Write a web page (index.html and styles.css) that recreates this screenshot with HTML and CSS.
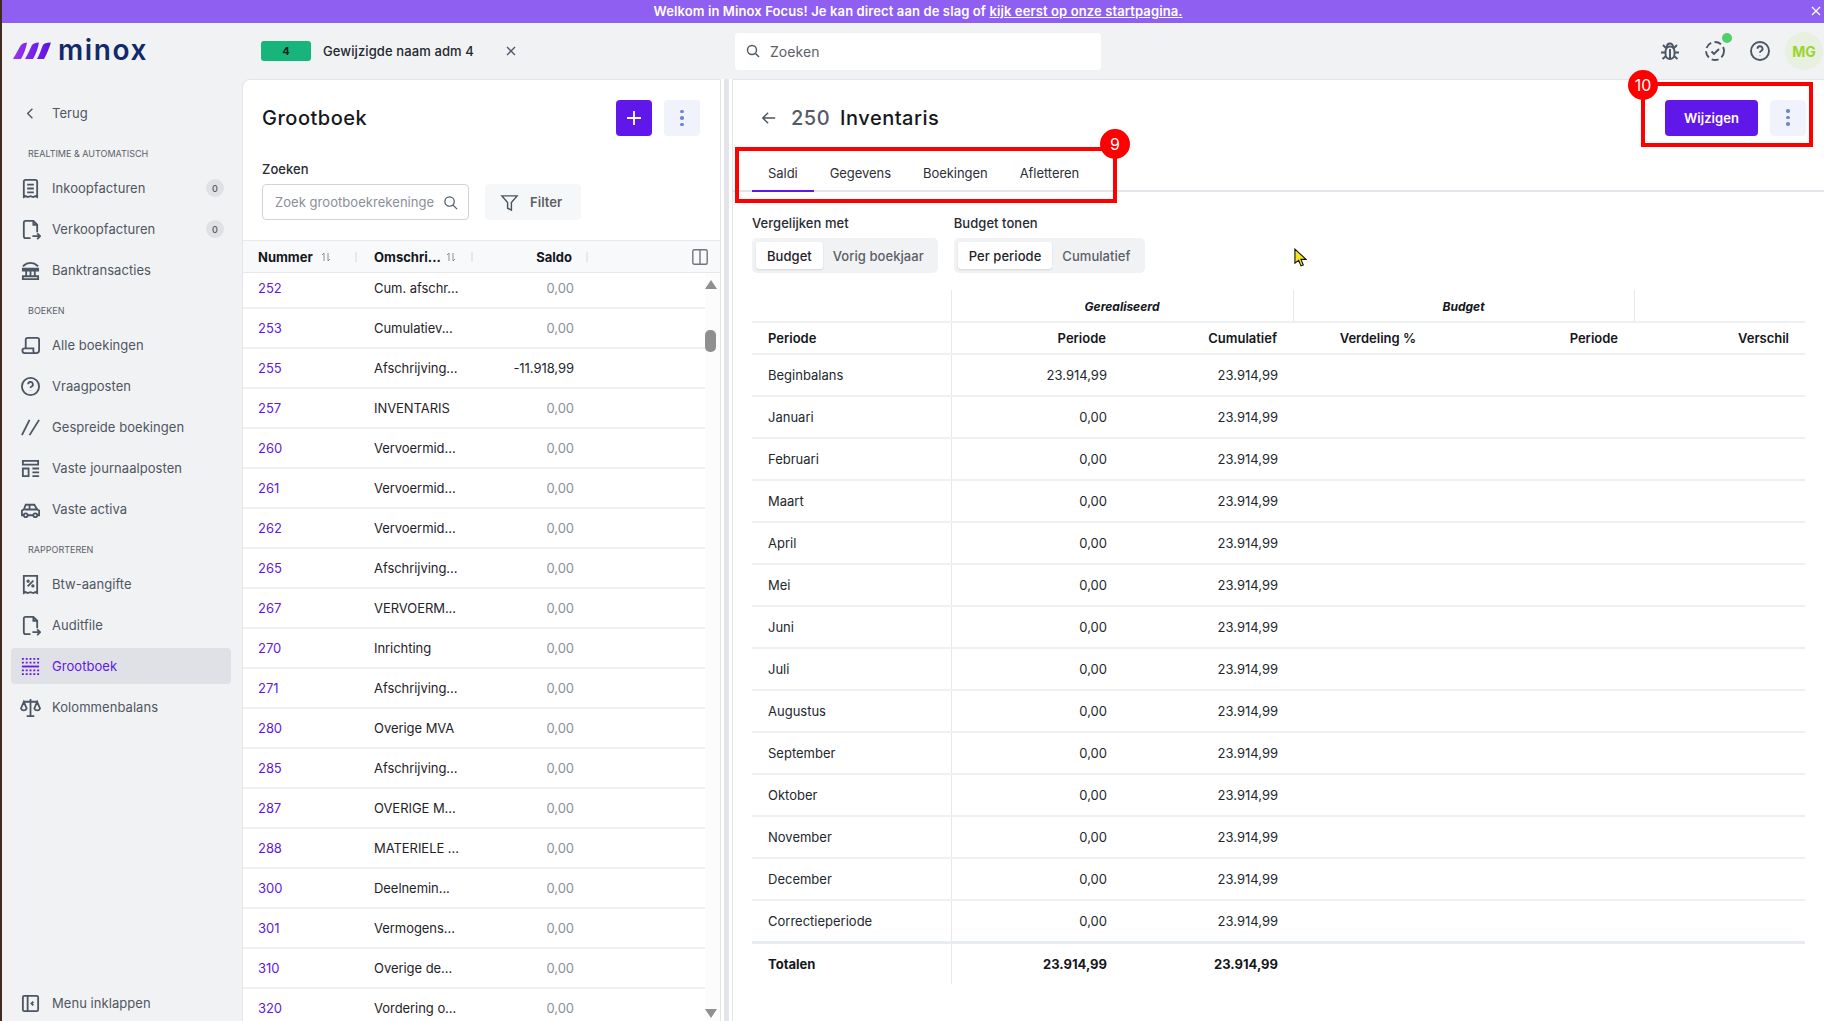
FILE: index.html
```html
<!DOCTYPE html>
<html lang="nl">
<head>
  <meta charset="UTF-8">
  <title>Minox - Grootboek</title>
  <link rel="stylesheet" href="styles.css">
</head>
<body>
  <div class="banner">
    <span>Welkom in Minox Focus! Je kan direct aan de slag of <u>kijk eerst op onze startpagina.</u></span>
    <svg class="banner-close" viewBox="0 0 12 12"><path d="M2 2l8 8M10 2l-8 8"/></svg>
  </div>

  <header class="topbar">
    <div class="brand">
      <svg class="brand-mark" viewBox="0 0 38 17">
        <defs>
          <linearGradient id="markFill" x1="0" x2="1" y1="0" y2="0">
            <stop offset="0" stop-color="#9a35ea"/>
            <stop offset="1" stop-color="#5a12e6"/>
          </linearGradient>
        </defs>
        <path fill="url(#markFill)" d="M0 17C3 12 6 6 8 3Q10 .5 14 .5C13 6 11 12 8 17zM12 17C15 12 17 7 19 3Q21 .5 26 .5C25 6 23 12 20 17zM24 17C27 12 28 7 30 3Q31 .5 38 .5C36 6 34 12 31 17z"/>
      </svg>
      <span class="brand-name">minox</span>
    </div>
    <div class="admin">
      <span class="admin-badge">4</span>
      <span class="admin-name">Gewijzigde naam adm 4</span>
      <svg class="admin-close" viewBox="0 0 12 12"><path d="M2 2l8 8M10 2l-8 8"/></svg>
    </div>
    <div class="global-search">
      <svg viewBox="0 0 16 16"><circle cx="7" cy="7" r="4.500"/><path d="M10.500 10.500L14 14"/></svg>
      <span>Zoeken</span>
    </div>
    <div class="top-icons">
      <svg viewBox="0 0 22 22"><path d="M6.500 12a4.500 5.500 0 0 1 9 0v2a4.500 5 0 0 1-9 0zM8 8V6.500a3 3 0 0 1 6 0V8M11 9v10M6.500 12.500H2M15.500 12.500H20M7 8L4 5M15 8l3-3M7 16l-3.500 3M15 16l3.500 3"/></svg>
      <span class="task-icon">
        <svg viewBox="0 0 22 22"><circle cx="11" cy="11" r="9" stroke-dasharray="7 3.400"/><path d="M7.500 11.500l2.500 2.500 5-5"/></svg>
        <i class="task-dot"></i>
      </span>
      <svg viewBox="0 0 22 22"><circle cx="11" cy="11" r="9"/><path d="M8.500 8.700a2.500 2.500 0 1 1 3.600 2.300c-.8.400-1.100.9-1.100 1.700M11 15.500v.3"/></svg>
      <span class="avatar">MG</span>
    </div>
  </header>

  <div class="main">
    <nav class="sidebar">
      <a class="nav-item nav-back">
        <svg viewBox="0 0 22 22"><path d="M13 6l-5 5 5 5"/></svg>
        <span>Terug</span>
      </a>
      <div class="nav-label">Realtime &amp; automatisch</div>
      <a class="nav-item">
        <svg viewBox="0 0 22 22"><path d="M4 20V4a2 2 0 0 1 2-2h10a2 2 0 0 1 2 2v16l-2-1-2 1-3-1-3 1-2-1zM7.500 7h7M7.500 11h7M7.500 15h7"/></svg>
        <span>Inkoopfacturen</span><b class="count">0</b>
      </a>
      <a class="nav-item">
        <svg viewBox="0 0 22 22"><path d="M11 20H6a2 2 0 0 1-2-2V4a2 2 0 0 1 2-2h8l4 4v8M14 2v4h4M13 18h8M18 15l3 3-3 3"/></svg>
        <span>Verkoopfacturen</span><b class="count">0</b>
      </a>
      <a class="nav-item">
        <svg viewBox="0 0 22 22"><path d="M2 20h18M3 17h16v3H3zM3 9h16v2H3zM6.500 11v6M11 11v6M15.500 11v6M3 6.500c5-4.500 11-4.500 16 0"/></svg>
        <span>Banktransacties</span>
      </a>
      <div class="nav-label">Boeken</div>
      <a class="nav-item">
        <svg viewBox="0 0 22 22"><path d="M6 14V5a2 2 0 0 1 2-2h10a2 2 0 0 1 2 2v11a3 3 0 0 1-3 3H5a2.500 2.500 0 0 1 0-5h9v2.500a2.500 2.500 0 0 0 3 2.500"/></svg>
        <span>Alle boekingen</span>
      </a>
      <a class="nav-item">
        <svg viewBox="0 0 22 22"><circle cx="11" cy="11" r="9"/><path d="M8.500 8.700a2.500 2.500 0 1 1 3.600 2.300c-.8.400-1.100.9-1.100 1.700M11 15.500v.3"/></svg>
        <span>Vraagposten</span>
      </a>
      <a class="nav-item">
        <svg viewBox="0 0 22 22"><path d="M10 3L2 19M20 3L10 19"/></svg>
        <span>Gespreide boekingen</span>
      </a>
      <a class="nav-item">
        <svg viewBox="0 0 22 22"><path d="M3 3h16v4H3zM3 11h6v8H3zM13 11h7M13 15h7M13 19h7"/></svg>
        <span>Vaste journaalposten</span>
      </a>
      <a class="nav-item">
        <svg viewBox="0 0 22 22"><path d="M4 17H2v-5l2-1 2-5h9l3 5 2 1v5h-2M8 17h6M5 11h14M10 6v5"/><circle cx="6" cy="17" r="2"/><circle cx="16" cy="17" r="2"/></svg>
        <span>Vaste activa</span>
      </a>
      <div class="nav-label">Rapporteren</div>
      <a class="nav-item">
        <svg viewBox="0 0 22 22"><path d="M4 20V2h14v18l-2-1-2 1-3-1-3 1-2-1zM8 13l6-6"/><circle cx="8.500" cy="7.500" r=".8"/><circle cx="13.500" cy="12.500" r=".8"/></svg>
        <span>Btw-aangifte</span>
      </a>
      <a class="nav-item">
        <svg viewBox="0 0 22 22"><path d="M11 20H6a2 2 0 0 1-2-2V4a2 2 0 0 1 2-2h8l4 4v8M14 2v4h4M13 18h8M18 15l3 3-3 3"/></svg>
        <span>Auditfile</span>
      </a>
      <a class="nav-item is-active">
        <svg viewBox="0 0 22 22"><path class="dots" d="M2 3h18M2 7h18M2 15h18M2 19h18"/><path d="M2 11h18"/></svg>
        <span>Grootboek</span>
      </a>
      <a class="nav-item">
        <svg viewBox="0 0 22 22"><path d="M11 2v17M7 20h8M4 5h14M4 5l-3 7a3.200 3.200 0 0 0 6 0zM18 5l-3 7a3.200 3.200 0 0 0 6 0z"/></svg>
        <span>Kolommenbalans</span>
      </a>
      <a class="nav-item nav-collapse">
        <svg viewBox="0 0 22 22"><rect x="3" y="3" width="16" height="16" rx="1.500"/><path d="M8 3v16M14 9l-2 2 2 2"/></svg>
        <span>Menu inklappen</span>
      </a>
    </nav>

    <section class="list-panel">
      <div class="list-head">
        <h1>Grootboek</h1>
        <button class="btn-add"><svg viewBox="0 0 16 16"><path d="M8 1v14M1 8h14"/></svg></button>
        <button class="btn-more"><i></i><i></i><i></i></button>
      </div>
      <div class="list-search">
        <div class="field-label">Zoeken</div>
        <div class="search-row">
          <div class="search-input">
            <span>Zoek grootboekrekeningen</span>
            <svg viewBox="0 0 16 16"><circle cx="7" cy="7" r="5"/><path d="M10.500 10.500L15 15"/></svg>
          </div>
          <button class="btn-filter">
            <svg viewBox="0 0 20 20"><path d="M2 3h16l-6 7v8l-4-2v-6z"/></svg>
            <span>Filter</span>
          </button>
        </div>
      </div>
      <div class="list-header">
        <div class="col-num">Nummer<svg class="sort" viewBox="0 0 10 10"><path d="M3 9V1L1 3M7 1v8l2-2"/></svg></div>
        <i class="col-sep"></i>
        <div class="col-desc">Omschri...<svg class="sort" viewBox="0 0 10 10"><path d="M3 9V1L1 3M7 1v8l2-2"/></svg></div>
        <i class="col-sep"></i>
        <div class="col-saldo">Saldo</div>
        <i class="col-sep"></i>
        <svg class="col-toggle" viewBox="0 0 16 16"><rect x=".8" y=".8" width="14.400" height="14.400" rx="1.500"/><path d="M8 1v14"/></svg>
      </div>
      <div class="list-body">
        <div class="rows">
          <div class="row"><a>252</a><span>Cum. afschr...</span><em>0,00</em></div>
          <div class="row"><a>253</a><span>Cumulatiev...</span><em>0,00</em></div>
          <div class="row"><a>255</a><span>Afschrijving...</span><em class="neg">-11.918,99</em></div>
          <div class="row"><a>257</a><span>INVENTARIS</span><em>0,00</em></div>
          <div class="row"><a>260</a><span>Vervoermid...</span><em>0,00</em></div>
          <div class="row"><a>261</a><span>Vervoermid...</span><em>0,00</em></div>
          <div class="row"><a>262</a><span>Vervoermid...</span><em>0,00</em></div>
          <div class="row"><a>265</a><span>Afschrijving...</span><em>0,00</em></div>
          <div class="row"><a>267</a><span>VERVOERM...</span><em>0,00</em></div>
          <div class="row"><a>270</a><span>Inrichting</span><em>0,00</em></div>
          <div class="row"><a>271</a><span>Afschrijving...</span><em>0,00</em></div>
          <div class="row"><a>280</a><span>Overige MVA</span><em>0,00</em></div>
          <div class="row"><a>285</a><span>Afschrijving...</span><em>0,00</em></div>
          <div class="row"><a>287</a><span>OVERIGE M...</span><em>0,00</em></div>
          <div class="row"><a>288</a><span>MATERIELE ...</span><em>0,00</em></div>
          <div class="row"><a>300</a><span>Deelnemin...</span><em>0,00</em></div>
          <div class="row"><a>301</a><span>Vermogens...</span><em>0,00</em></div>
          <div class="row"><a>310</a><span>Overige de...</span><em>0,00</em></div>
          <div class="row"><a>320</a><span>Vordering o...</span><em>0,00</em></div>
        </div>
        <div class="scrollbar">
          <i class="arrow-up"></i>
          <i class="thumb"></i>
          <i class="arrow-down"></i>
        </div>
      </div>
    </section>

    <div class="divider"></div>

    <section class="detail-panel">
      <div class="detail-head">
        <svg class="back" viewBox="0 0 18 18"><path d="M16 9H2M8 3L2 9l6 6"/></svg>
        <h2><span class="acc-num">250</span>Inventaris</h2>
        <button class="btn-edit">Wijzigen</button>
        <button class="btn-more"><i></i><i></i><i></i></button>
      </div>
      <div class="tabs">
        <a class="is-active">Saldi</a>
        <a>Gegevens</a>
        <a>Boekingen</a>
        <a>Afletteren</a>
      </div>
      <div class="filters">
        <div>
          <div class="field-label">Vergelijken met</div>
          <div class="segment"><b>Budget</b><span>Vorig boekjaar</span></div>
        </div>
        <div>
          <div class="field-label">Budget tonen</div>
          <div class="segment"><b>Per periode</b><span>Cumulatief</span></div>
        </div>
      </div>
      <table class="saldi">
        <colgroup>
          <col class="w-label"><col class="w-amt"><col class="w-amt"><col class="w-pct"><col class="w-bud"><col class="w-amt">
        </colgroup>
        <thead>
          <tr class="group-row">
            <th></th>
            <th colspan="2" class="group sep-r">Gerealiseerd</th>
            <th colspan="2" class="group sep-r">Budget</th>
            <th></th>
          </tr>
          <tr class="col-row">
            <th class="txt">Periode</th><th>Periode</th><th>Cumulatief</th><th>Verdeling %</th><th>Periode</th><th>Verschil</th>
          </tr>
        </thead>
        <tbody>
          <tr><td class="txt">Beginbalans</td><td>23.914,99</td><td>23.914,99</td><td></td><td></td><td></td></tr>
          <tr><td class="txt">Januari</td><td>0,00</td><td>23.914,99</td><td></td><td></td><td></td></tr>
          <tr><td class="txt">Februari</td><td>0,00</td><td>23.914,99</td><td></td><td></td><td></td></tr>
          <tr><td class="txt">Maart</td><td>0,00</td><td>23.914,99</td><td></td><td></td><td></td></tr>
          <tr><td class="txt">April</td><td>0,00</td><td>23.914,99</td><td></td><td></td><td></td></tr>
          <tr><td class="txt">Mei</td><td>0,00</td><td>23.914,99</td><td></td><td></td><td></td></tr>
          <tr><td class="txt">Juni</td><td>0,00</td><td>23.914,99</td><td></td><td></td><td></td></tr>
          <tr><td class="txt">Juli</td><td>0,00</td><td>23.914,99</td><td></td><td></td><td></td></tr>
          <tr><td class="txt">Augustus</td><td>0,00</td><td>23.914,99</td><td></td><td></td><td></td></tr>
          <tr><td class="txt">September</td><td>0,00</td><td>23.914,99</td><td></td><td></td><td></td></tr>
          <tr><td class="txt">Oktober</td><td>0,00</td><td>23.914,99</td><td></td><td></td><td></td></tr>
          <tr><td class="txt">November</td><td>0,00</td><td>23.914,99</td><td></td><td></td><td></td></tr>
          <tr><td class="txt">December</td><td>0,00</td><td>23.914,99</td><td></td><td></td><td></td></tr>
          <tr><td class="txt">Correctieperiode</td><td>0,00</td><td>23.914,99</td><td></td><td></td><td></td></tr>
        </tbody>
        <tfoot>
          <tr><td class="txt">Totalen</td><td>23.914,99</td><td>23.914,99</td><td></td><td></td><td></td></tr>
        </tfoot>
      </table>
    </section>
  </div>

  <!-- annotations drawn on top of the screenshot -->
  <div class="mark mark-tabs"><span class="mark-num">9</span></div>
  <div class="mark mark-actions"><span class="mark-num">10</span></div>
  <svg class="cursor" viewBox="0 0 14 20"><path d="M1 1v15l4-3 2.500 6 2.500-1-2.500-6H13z"/></svg>
</body>
</html>
```

FILE: styles.css
```css
* {
  box-sizing: border-box;
}
html, body {
  height: 100%;
}
body {
  margin: 0;
  position: relative;
  display: flex;
  flex-direction: column;
  overflow: hidden;
  border-left: 2px solid #3f2b20;
  font-family: Inter, "Liberation Sans", sans-serif;
  font-size: 13px;
  letter-spacing: .05px;
  color: #1f2329;
  background: #f1f2f4;
}
svg {
  fill: none;
  stroke: #4b5563;
  stroke-width: 1.9;
  flex: none;
}
button {
  border: none;
  font-family: inherit;
  letter-spacing: inherit;
}

/* banner */
.banner {
  flex: none;
  height: 23px;
  display: flex;
  align-items: center;
  justify-content: center;
  padding: 0 0 2px 10px;
  position: relative;
  background: #8f5ff2;
  color: #fff;
  font-size: 13px;
  font-weight: 600;
  letter-spacing: .11px;
}
.banner-close {
  position: absolute;
  right: 2px;
  top: 5px;
  width: 12px;
  height: 12px;
  stroke: #fff;
  stroke-width: 1.3;
}

/* top bar */
.topbar {
  flex: none;
  height: 56px;
  display: flex;
  align-items: center;
}
.brand {
  width: 259px;
  flex: none;
  display: flex;
  align-items: center;
  padding-left: 11px;
  padding-bottom: 3px;
}
.brand-mark {
  width: 38px;
  height: 17px;
  margin-top: 2px;
  stroke: none;
}
.brand-name {
  margin-left: 7px;
  font-size: 28px;
  line-height: 30px;
  font-weight: 600;
  letter-spacing: 1.600px;
  color: #12296b;
}
.admin {
  width: 474px;
  flex: none;
  display: flex;
  align-items: center;
}
.admin-badge {
  width: 50px;
  height: 20px;
  display: flex;
  align-items: center;
  justify-content: center;
  background: #17b47b;
  border-radius: 3px;
  font-size: 11px;
  font-weight: 700;
  color: #10241b;
}
.admin-name {
  margin-left: 12px;
  font-weight: 500;
  letter-spacing: .1px;
  color: #23272e;
}
.admin-close {
  margin-left: 31px;
  width: 12px;
  height: 12px;
  stroke-width: 1.3;
}
.global-search {
  width: 366px;
  height: 37px;
  flex: none;
  display: flex;
  align-items: center;
  gap: 9px;
  padding-left: 10px;
  background: #fff;
  border-radius: 4px;
  font-size: 14px;
  color: #5b6068;
}
.global-search svg {
  width: 16px;
  height: 16px;
  stroke-width: 1.4;
}
.top-icons {
  margin-left: auto;
  display: flex;
  align-items: center;
  gap: 23px;
}
.top-icons > svg, .task-icon svg {
  width: 22px;
  height: 22px;
  display: block;
}
.task-icon {
  position: relative;
}
.task-dot {
  position: absolute;
  top: -7px;
  right: -6px;
  width: 10px;
  height: 10px;
  border-radius: 50%;
  background: #4fd069;
}
.avatar {
  width: 38px;
  height: 38px;
  margin-left: -9px;
  margin-right: 1px;
  display: flex;
  align-items: center;
  justify-content: center;
  border-radius: 50%;
  background: #e8f0df;
  color: #9ad430;
  font-size: 14px;
  font-weight: 700;
}

/* layout */
.main {
  flex: 1;
  min-height: 0;
  display: flex;
}

/* sidebar */
.sidebar {
  width: 240px;
  flex: none;
  display: flex;
  flex-direction: column;
  padding: 16px 11px 0 9px;
}
.nav-item {
  height: 36px;
  flex: none;
  margin-bottom: 5px;
  display: flex;
  align-items: center;
  padding: 0 9px;
  border-radius: 4px;
  color: #4f5661;
}
.nav-item svg {
  width: 21px;
  height: 21px;
  margin-right: 11px;
}
.nav-label {
  height: 34px;
  flex: none;
  padding: 11px 0 0 17px;
  font-size: 9px;
  line-height: 14px;
  letter-spacing: 0;
  text-transform: uppercase;
  color: #5b6068;
}
.nav-back svg {
  stroke-width: 1.4;
}
.count {
  margin-left: auto;
  margin-right: -2px;
  width: 18px;
  height: 18px;
  display: flex;
  align-items: center;
  justify-content: center;
  border-radius: 50%;
  background: #dfe1e5;
  font-size: 9px;
  font-weight: 500;
}
.is-active.nav-item {
  background: #dfe1e6;
  color: #5f17ea;
}
.is-active svg {
  stroke: #5f17ea;
}
.is-active .dots {
  stroke-dasharray: 2 2;
}
.nav-collapse {
  margin-top: auto;
  margin-bottom: 0;
}

/* account list */
.list-panel {
  width: 479px;
  flex: none;
  display: flex;
  flex-direction: column;
  min-height: 0;
  background: #fff;
  border: 1px solid #e3e5ea;
  border-bottom: none;
  border-radius: 8px 0 0 0;
}
.list-head {
  height: 78px;
  flex: none;
  display: flex;
  align-items: center;
  padding: 0 20px 2px 19px;
}
h1, h2 {
  margin: 0;
  font-size: 20px;
  font-weight: 500;
  letter-spacing: .5px;
  color: #14171c;
}
.list-head h1 {
  margin-right: auto;
}
.btn-add {
  width: 36px;
  height: 36px;
  margin-right: 12px;
  display: flex;
  align-items: center;
  justify-content: center;
  background: #5f17ea;
  border-radius: 4px;
}
.btn-add svg {
  width: 16px;
  height: 16px;
  stroke: #fff;
  stroke-width: 1.8;
}
.btn-more {
  width: 36px;
  height: 36px;
  display: flex;
  flex-direction: column;
  align-items: center;
  justify-content: center;
  gap: 3px;
  background: #f0f3fb;
  border-radius: 4px;
}
.btn-more i {
  width: 3.500px;
  height: 3.500px;
  border-radius: 50%;
  background: #6f86cf;
}
.list-search {
  flex: none;
  padding: 0 19px;
  height: 82px;
}
.field-label {
  height: 18px;
  line-height: 18px;
  margin-bottom: 6px;
  font-size: 13px;
  font-weight: 500;
  color: #262a31;
}
.list-search .field-label {
  margin-top: 2px;
  margin-bottom: 6px;
}
.search-row {
  display: flex;
  gap: 16px;
}
.search-input {
  width: 207px;
  height: 36px;
  display: flex;
  align-items: center;
  justify-content: space-between;
  padding: 0 10px 0 12px;
  border: 1px solid #cfd3d9;
  border-radius: 4px;
  color: #8a8f98;
}
.search-input span {
  width: 160px;
  overflow: hidden;
  white-space: nowrap;
}
.search-input svg {
  width: 15px;
  height: 15px;
  stroke-width: 1.3;
}
.btn-filter {
  width: 96px;
  height: 36px;
  display: flex;
  align-items: center;
  padding-left: 15px;
  gap: 11px;
  background: #f6f7f8;
  border-radius: 4px;
  font-size: 13px;
  font-weight: 600;
  color: #5b6068;
}
.btn-filter svg {
  width: 19px;
  height: 19px;
  stroke-width: 1.5;
}
.list-header {
  height: 33px;
  flex: none;
  display: flex;
  align-items: center;
  background: #f8f9fa;
  border-top: 1px solid #e6e8ec;
  border-bottom: 1px solid #e6e8ec;
  font-size: 13px;
  font-weight: 700;
  letter-spacing: 0;
  color: #14171c;
}
.col-num {
  width: 112px;
  padding-left: 15px;
  display: flex;
  align-items: center;
}
.col-desc {
  width: 114px;
  padding-left: 17px;
  display: flex;
  align-items: center;
}
.col-desc .sort {
  margin-left: 5px;
}
.col-saldo {
  width: 113px;
  text-align: right;
  padding-right: 14px;
}
.sort {
  width: 10px;
  height: 10px;
  margin-left: 8px;
  stroke: #8a8f98;
  stroke-width: 1;
}
.col-sep {
  width: 2px;
  height: 10px;
  background: #e6e8ec;
  flex: none;
}
.col-toggle {
  margin-left: 104px;
  width: 16px;
  height: 16px;
  stroke: #70757e;
  stroke-width: 1.400;
}
.list-body {
  flex: 1;
  min-height: 0;
  display: flex;
  overflow: hidden;
}
.rows {
  flex: 1;
  margin-top: -4px;
}
.row {
  height: 40px;
  display: flex;
  align-items: center;
  border-bottom: 2px solid #eef0f2;
  font-size: 13px;
  letter-spacing: -.05px;
}
.row a {
  width: 114px;
  padding-left: 15px;
  color: #5f17ea;
}
.row span {
  width: 117px;
  padding-left: 17px;
  flex: none;
  white-space: nowrap;
}
.row em {
  width: 100px;
  flex: none;
  font-style: normal;
  text-align: right;
  color: #8a8f98;
}
.row em.neg {
  color: #23272e;
}
.scrollbar {
  width: 15px;
  flex: none;
  display: flex;
  flex-direction: column;
  align-items: flex-start;
  background: #fcfcfc;
}
.arrow-up {
  margin: 7px 0 0 0;
  border: 6px solid transparent;
  border-top: none;
  border-bottom: 9px solid #8f8f8f;
}
.thumb {
  width: 11px;
  height: 22px;
  margin-top: 41px;
  border-radius: 5px;
  background: #8f8f8f;
}
.arrow-down {
  margin: auto 0 3px 0;
  border: 6px solid transparent;
  border-bottom: none;
  border-top: 9px solid #8f8f8f;
}
.divider {
  width: 11px;
  flex: none;
  border-left: 3px solid #fff;
  border-right: 3px solid #fff;
  background: #e3e5ea;
}

/* detail */
.detail-panel {
  flex: 1;
  min-width: 0;
  background: #fff;
  border-left: 1px solid #e3e5ea;
  border-top: 1px solid #e3e5ea;
}
.detail-head {
  height: 72px;
  display: flex;
  align-items: center;
  padding: 1px 18px 0 28px;
  margin-top: 1px;
}
.back {
  width: 16px;
  height: 16px;
  margin-right: 14px;
  stroke-width: 1.600;
}
.detail-head h2 {
  margin-right: auto;
}
.acc-num {
  margin-right: 10px;
  color: #555b65;
}
.btn-edit {
  width: 93px;
  height: 36px;
  margin-right: 12px;
  background: #5f17ea;
  border-radius: 4px;
  color: #fff;
  font-size: 13px;
  font-weight: 600;
}
.tabs {
  height: 39px;
  display: flex;
  padding-left: 19px;
  border-bottom: 2px solid #e3e5ea;
}
.tabs a {
  height: 39px;
  padding: 12px 16px 0;
  line-height: 17px;
  letter-spacing: -.05px;
  color: #2b2f36;
}
.tabs a.is-active {
  border-bottom: 2px solid #5f17ea;
}
.filters {
  display: flex;
  gap: 16px;
  padding: 22px 0 0 19px;
}
.segment {
  height: 35px;
  display: flex;
  align-items: center;
  padding: 0 4px;
  background: #f1f2f4;
  border-radius: 5px;
  font-size: 13px;
}
.segment b {
  height: 27px;
  padding: 0 11px;
  display: flex;
  align-items: center;
  background: #fff;
  border-radius: 3px;
  box-shadow: 0 1px 2px rgba(0,0,0,0.12);
  font-weight: 500;
  color: #1f2329;
}
.segment span {
  padding: 0 10px;
  color: #5b6068;
  font-weight: 500;
}

/* saldi table */
.saldi {
  margin: 17px 0 0 19px;
  width: 1053px;
  table-layout: fixed;
  border-collapse: collapse;
  font-size: 13px;
  letter-spacing: 0;
}
.w-label { width: 199px; }
.w-amt { width: 171px; }
.w-pct { width: 139px; }
.w-bud { width: 202px; }
.saldi th, .saldi td {
  padding: 0 16px;
  text-align: right;
}
.saldi td {
  padding-right: 15px;
}
.saldi th {
  font-weight: 600;
  color: #14171c;
}
.saldi .txt {
  text-align: left;
}
.saldi tr > :first-child {
  border-right: 1px solid #e6e8ec;
}
.group-row th {
  height: 32px;
  padding-top: 2px;
  border-bottom: 2px solid #eef0f2;
}
.saldi .group {
  text-align: center;
  font-size: 12px;
  font-weight: 700;
  font-style: italic;
}
.saldi .sep-r {
  border-right: 1px solid #e6e8ec;
}
.col-row th {
  height: 32px;
  border-bottom: 2px solid #eef0f2;
}
.saldi tbody td {
  height: 42px;
  border-bottom: 2px solid #eef0f2;
  color: #23272e;
}
.saldi tbody tr:last-child td {
  border-bottom: 3px solid #e8ebef;
}
.saldi tfoot td {
  height: 42px;
  font-weight: 700;
  color: #14171c;
}

/* annotations */
.mark {
  position: absolute;
  border: 4px solid #f00;
}
.mark-tabs {
  left: 733px;
  top: 147px;
  width: 382px;
  height: 56px;
}
.mark-actions {
  left: 1639px;
  top: 82px;
  width: 172px;
  height: 65px;
}
.mark-num {
  position: absolute;
  width: 30px;
  height: 30px;
  display: flex;
  align-items: center;
  justify-content: center;
  border-radius: 50%;
  background: #f00;
  color: #fff;
  font-size: 16px;
}
.mark-tabs .mark-num {
  right: -17px;
  top: -22px;
}
.mark-actions .mark-num {
  left: -17px;
  top: -16px;
}
.cursor {
  position: absolute;
  left: 1292px;
  top: 248px;
  width: 13px;
  height: 19px;
  fill: #f7e51c;
  stroke: #111;
  stroke-width: 1.2;
}
```
